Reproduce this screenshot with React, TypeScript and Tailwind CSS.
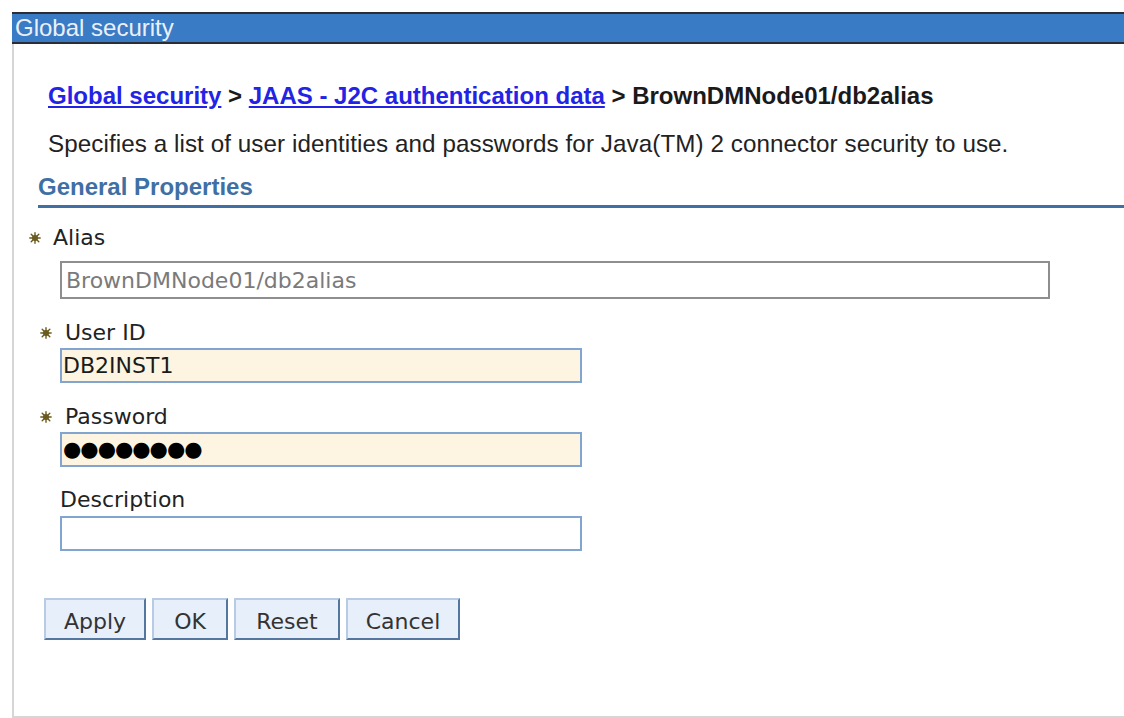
import React from 'react';

const Star = () => (
  <svg width="12" height="12" viewBox="0 0 12 12" className="shrink-0">
    <g stroke="#6b5a1e" strokeWidth="1.4" strokeLinecap="round">
      <line x1="6" y1="0.8" x2="6" y2="11.2" />
      <line x1="0.8" y1="6" x2="11.2" y2="6" />
      <line x1="2.2" y1="2.2" x2="9.8" y2="9.8" />
      <line x1="9.8" y1="2.2" x2="2.2" y2="9.8" />
    </g>
    <circle cx="6" cy="6" r="3" fill="#6b5a1e" />
  </svg>
);

const buttons = [
  { label: 'Apply', w: 'w-[102px]' },
  { label: 'OK', w: 'w-[76px]' },
  { label: 'Reset', w: 'w-[106px]' },
  { label: 'Cancel', w: 'w-[114px]' },
];

export default function App() {
  return (
    <div className="w-[1124px] h-[718px] bg-white pt-[12px] pl-[12px] overflow-hidden font-['Liberation_Sans',Arial,sans-serif]">
      <div className="h-[32px] bg-[#3a7bc5] border-y-2 border-[#2a2d33] pl-[3px] flex items-center text-[24px] leading-none text-[#eaf0f8]">
        Global security
      </div>
      <div className="border-l-2 border-b-2 border-[#d6d6d6] h-[674px] flex flex-col">
        <div className="mt-[38px] ml-[34px] text-[24px] leading-[28px] font-bold text-[#1a1a1a]">
          <a href="#" className="text-[#2323e6] underline">Global security</a>
          {' > '}
          <a href="#" className="text-[#2323e6] underline">JAAS - J2C authentication data</a>
          {' > BrownDMNode01/db2alias'}
        </div>
        <div className="mt-[20px] ml-[34px] text-[24.2px] leading-[28px] tracking-[0.08px] text-[#222]">
          Specifies a list of user identities and passwords for Java(TM) 2 connector security to use.
        </div>
        <div className="mt-[15px] ml-[24px] pb-[4px] border-b-[3px] border-[#3f6fa3] text-[24px] leading-[28px] font-bold text-[#3e6fa5]">
          General Properties
        </div>

        <div className="font-['DejaVu_Sans',sans-serif] text-[#222]">
          <div className="mt-[16px] ml-[15px] flex items-center gap-[12px] text-[22px] leading-[28px]">
            <Star />
            <span>Alias</span>
          </div>
          <div className="mt-[9px] ml-[46px] w-[990px] h-[38px] border-2 border-[#8e8e8e] bg-white flex items-center pl-[4px] text-[22px] text-[#7a7a7a]">
            BrownDMNode01/db2alias
          </div>

          <div className="mt-[20px] ml-[26px] flex items-center gap-[13px] text-[22px] leading-[28px]">
            <Star />
            <span>User ID</span>
          </div>
          <div className="mt-[1px] ml-[46px] w-[522px] h-[35px] border-2 border-[#82a5cf] bg-[#fdf5e1] flex items-center pl-[1px] text-[22px] text-[#1a1a1a]">
            DB2INST1
          </div>

          <div className="mt-[20px] ml-[26px] flex items-center gap-[13px] text-[22px] leading-[28px]">
            <Star />
            <span>Password</span>
          </div>
          <div className="mt-[1px] ml-[46px] w-[522px] h-[35px] border-2 border-[#82a5cf] bg-[#fdf5e1] flex items-center pl-[1px] text-[21px] tracking-[-1px] text-black">
            ●●●●●●●●
          </div>

          <div className="mt-[19px] ml-[46px] text-[22px] leading-[28px]">Description</div>
          <div className="mt-[2px] ml-[46px] w-[522px] h-[35px] border-2 border-[#82a5cf] bg-white" />

          <div className="mt-[47px] ml-[30px] flex gap-[6px]">
            {buttons.map((b) => (
              <button
                key={b.label}
                className={`${b.w} h-[42px] pt-[4px] bg-[#e7effa] border-2 border-t-[#b7cbe4] border-l-[#b7cbe4] border-b-[#55769f] border-r-[#55769f] text-[22px] text-[#333] flex items-center justify-center`}
              >
                {b.label}
              </button>
            ))}
          </div>
        </div>
      </div>
    </div>
  );
}
